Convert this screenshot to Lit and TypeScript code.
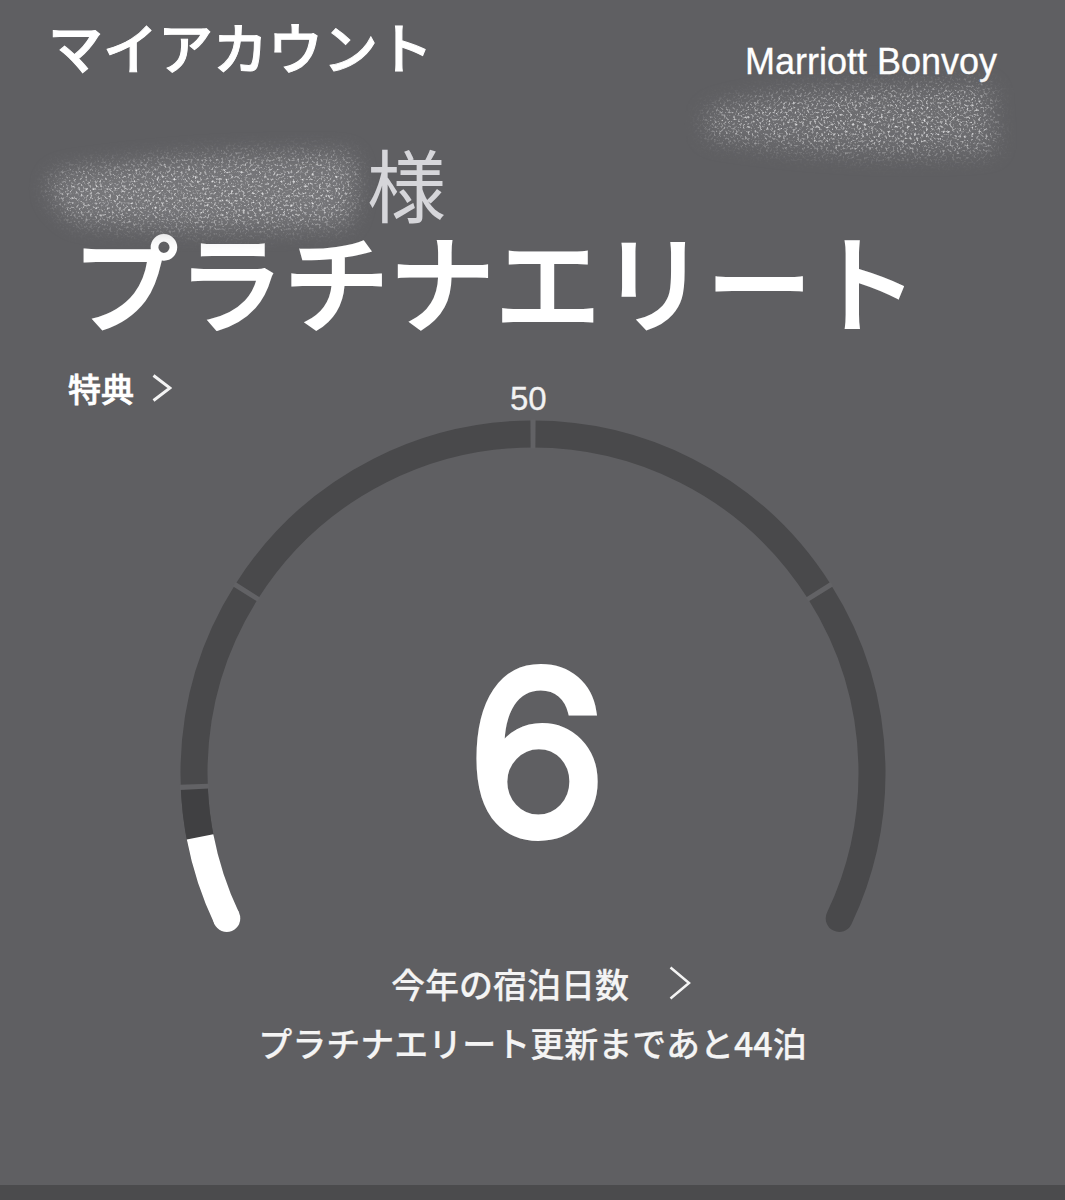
import { LitElement, html, css, svg } from "lit";
import { customElement } from "lit/decorators.js";

const CX = 533, CY = 773, R = 339, SWEEP = 230.8, MAX = 100;
const ang = (v: number) => -SWEEP / 2 + (v / MAX) * SWEEP;
const pt = (a: number) => {
  const t = (a * Math.PI) / 180;
  return [CX + R * Math.sin(t), CY - R * Math.cos(t)];
};
const arc = (a0: number, a1: number) => {
  const [x0, y0] = pt(a0), [x1, y1] = pt(a1);
  return `M${x0.toFixed(2)} ${y0.toFixed(2)}A${R} ${R} 0 ${a1 - a0 > 180 ? 1 : 0} 1 ${x1.toFixed(2)} ${y1.toFixed(2)}`;
};

const chevron = (w: number, h: number, sw: number) => html`
  <svg class="chev" width=${w} height=${h} viewBox="0 0 ${w} ${h}">
    <path d="M1.5 1.5L${w - 2} ${h / 2}L1.5 ${h - 1.5}" fill="none" stroke="#f4f4f4" stroke-width=${sw} />
  </svg>`;

@customElement("app-root")
export class AppRoot extends LitElement {
  static styles = css`
    :host {
      display: block;
      width: 1065px;
      height: 1200px;
      background: #5f5f62;
      color: #fff;
      font-family: "Liberation Sans", "Noto Sans CJK JP", sans-serif;
      position: relative;
      overflow: hidden;
    }
    .jp { font-family: "Noto Sans CJK JP", sans-serif; }
    .page { display: flex; flex-direction: column; height: 1200px; }
    .head {
      display: flex;
      justify-content: space-between;
      align-items: flex-start;
      height: 133px;
      padding: 0 68px 0 48px;
    }
    .title { font-size: 55px; line-height: 90px; font-weight: 500; white-space: nowrap; -webkit-text-stroke: 1px #fff; }
    .brand { font-size: 36px; line-height: 40px; margin-top: 42px; white-space: nowrap; -webkit-text-stroke: 0.3px #fff; }
    .guest {
      height: 95px;
      padding-left: 367px;
      font-size: 79px;
      line-height: 100px;
      font-weight: 400;
      color: #d6d6da;
    }
    .rank {
      height: 100px;
      padding-left: 72px;
      font-size: 106px;
      line-height: 100px;
      font-weight: 500;
      white-space: nowrap;
      letter-spacing: -0.3px;
      -webkit-text-stroke: 2px #fff;
    }
    .perk {
      display: flex;
      align-items: center;
      gap: 18px;
      height: 44px;
      margin-top: 38px;
      padding-left: 68px;
      font-size: 33px;
      font-weight: 500;
      -webkit-text-stroke: 0.6px #fff;
    }
    .gauge { position: relative; height: 558px; margin-top: -1px; }
    .gauge svg.dial { position: absolute; left: 0; top: -409px; }
    .max {
      position: absolute;
      left: 510px;
      top: -28px;
      font-size: 33px;
      line-height: 36px;
      color: #f2f2f2;
      -webkit-text-stroke: 0.3px #f2f2f2;
    }
    .value {
      position: absolute;
      left: 0;
      width: 1065px;
      padding-left: 9px;
      box-sizing: border-box;
      top: 199px;
      text-align: center;
      font-family: "Inter", "Liberation Sans", sans-serif;
      font-size: 226px;
      line-height: 290px;
      font-weight: 400;
      -webkit-text-stroke: 8px #fff;
    }
    .nights {
      display: flex;
      justify-content: center;
      align-items: center;
      gap: 40px;
      height: 60px;
      padding-left: 17px;
      margin-top: -14px;
      font-size: 34px;
      font-weight: 500;
      color: #f4f4f4;
      -webkit-text-stroke: 0.2px #f4f4f4;
    }
    .renew {
      height: 60px;
      text-align: center;
      font-size: 34px;
      line-height: 60px;
      font-weight: 500;
      color: #f4f4f4;
      white-space: nowrap;
      -webkit-text-stroke: 0.2px #f4f4f4;
    }
    .band { margin-top: auto; height: 15px; background: #4b4b4d; }
    .chev { display: block; flex: none; }
    .smudge { position: absolute; left: 0; top: 0; pointer-events: none; }
  `;

  render() {
    const ticks = [10, 25, 50, 75];
    const [ex, ey] = pt(ang(0));
    return html`
      <div class="page">
        <div class="head">
          <div class="title jp">マイアカウント</div>
          <div class="brand">Marriott Bonvoy</div>
        </div>
        <div class="guest jp">様</div>
        <div class="rank jp">プラチナエリート</div>
        <div class="perk jp">特典 ${chevron(20, 28, 3)}</div>
        <div class="gauge">
          <svg class="dial" width="1065" height="1000" viewBox="0 0 1065 1000">
            <path d=${arc(ang(0), ang(MAX))} fill="none" stroke="#49494b" stroke-width="27" stroke-linecap="round" />
            <path d=${arc(ang(6), ang(10))} fill="none" stroke="#404042" stroke-width="27" />
            ${ticks.map((t) => svg`
              <path d=${arc(ang(t) - 0.42, ang(t) + 0.42)} fill="none" stroke="#626265" stroke-width="29" />`)}
            <path d=${arc(ang(0), ang(6.3))} fill="none" stroke="#fff" stroke-width="27" />
            <circle cx=${ex} cy=${ey} r="13.5" fill="#fff" />
          </svg>
          <div class="max">50</div>
          <div class="value">6</div>
        </div>
        <div class="nights jp"><span>今年の宿泊日数</span>${chevron(22, 34, 2.5)}</div>
        <div class="renew jp">プラチナエリート更新まであと44泊</div>
        <div class="band"></div>
      </div>
      <svg class="smudge" width="1065" height="300" viewBox="0 0 1065 300">
        <defs>
          <filter id="grain" x="-15%" y="-40%" width="130%" height="180%">
            <feGaussianBlur in="SourceGraphic" stdDeviation="10" result="soft" />
            <feTurbulence type="fractalNoise" baseFrequency="0.42" numOctaves="2" seed="7" result="noise" />
            <feColorMatrix in="noise" type="matrix" values="0 0 0 0 0.78  0 0 0 0 0.78  0 0 0 0 0.79  3 0 0 0 -1.55" result="specks" />
            <feComposite in="specks" in2="soft" operator="in" />
          </filter>
          <filter id="haze" x="-15%" y="-40%" width="130%" height="180%">
            <feGaussianBlur stdDeviation="11" />
          </filter>
        </defs>
        <path d="M60 174Q200 152 350 156Q362 190 346 224Q200 234 76 220Q36 190 60 174Z" fill="#808083" opacity=".7" filter="url(#haze)" />
        <path d="M60 174Q200 152 350 156Q362 190 346 224Q200 234 76 220Q36 190 60 174Z" fill="#fff" filter="url(#grain)" />
        <path d="M708 112Q780 86 990 88L994 150Q860 160 708 136Z" fill="#7c7c7f" opacity=".5" filter="url(#haze)" />
        <path d="M708 112Q780 86 990 88L994 150Q860 160 708 136Z" fill="#fff" filter="url(#grain)" />
      </svg>
    `;
  }
}
